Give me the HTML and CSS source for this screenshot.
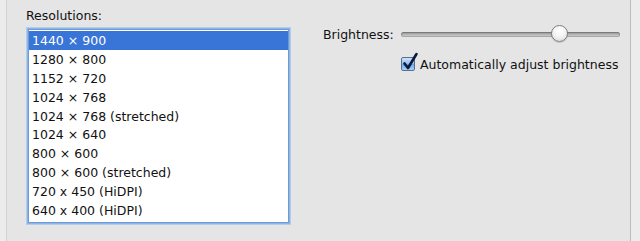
FILE: index.html
```html
<!DOCTYPE html>
<html>
<head>
<meta charset="utf-8">
<link rel="stylesheet" href="styles.css">
</head>
<body>
<div class="panel">
  <div class="left">
    <div class="caption">Resolutions:</div>
    <div class="listbox">
      <div class="row selected">1440 × 900</div>
      <div class="row">1280 × 800</div>
      <div class="row">1152 × 720</div>
      <div class="row">1024 × 768</div>
      <div class="row">1024 × 768 (stretched)</div>
      <div class="row">1024 × 640</div>
      <div class="row">800 × 600</div>
      <div class="row">800 × 600 (stretched)</div>
      <div class="row">720 x 450 (HiDPI)</div>
      <div class="row">640 x 400 (HiDPI)</div>
    </div>
  </div>
  <div class="right">
    <div class="bright-row">
      <span class="label">Brightness:</span>
      <div class="slider">
        <div class="track"></div>
        <div class="knob"></div>
      </div>
    </div>
    <div class="check-row">
      <span class="checkbox">
        <svg width="18" height="20" viewBox="0 0 18 20"><path d="M3.5 11.5 L7 16 L15.5 2" fill="none" stroke="#0d1a3a" stroke-width="2.6" stroke-linecap="round" stroke-linejoin="round"/></svg>
      </span>
      <span class="check-label">Automatically adjust brightness</span>
    </div>
  </div>
</div>
</body>
</html>
```
FILE: styles.css
```css
html, body {
  margin: 0;
  padding: 0;
}
body {
  background: #ececec;
  width: 640px;
  height: 241px;
  overflow: hidden;
  font-family: "DejaVu Sans", "Liberation Sans", sans-serif;
  font-size: 12.5px;
  color: #111;
}
.panel {
  margin-left: 6px;
  width: 625px;
  height: 241px;
  background: #e5e5e5;
  border-left: 1px solid #d2d2d2;
  border-right: 1px solid #bcbcbc;
  display: flex;
  box-sizing: border-box;
}
.left {
  margin-left: 21px;
  width: 261px;
  padding-top: 8px;
}
.caption {
  height: 16px;
  line-height: 16px;
  margin-left: -2px;
  margin-bottom: 5px;
}
.listbox {
  background: #fff;
  border: 1px solid #6f9ad6;
  box-shadow: 0 0 0 1px #8ab5ea, 0 0 0 2px rgba(140,185,235,0.55);
  padding-top: 1px;
  height: 194px;
  box-sizing: border-box;
}
.row {
  height: 18.9px;
  line-height: 19px;
  padding-left: 3px;
  white-space: nowrap;
}
.row.selected {
  background: #3875d7;
  color: #fff;
}
.right {
  margin-left: 34px;
  padding-top: 24px;
}
.bright-row {
  display: flex;
  align-items: center;
  height: 20px;
}
.label {
  width: 78px;
}
.slider {
  position: relative;
  width: 219px;
  height: 20px;
}
.track {
  position: absolute;
  left: 0;
  right: 0;
  top: 8px;
  height: 5px;
  border-radius: 3px;
  background: linear-gradient(#8c8c8c, #bdbdbd 60%, #d4d4d4);
  box-shadow: inset 0 0 0 1px rgba(0,0,0,0.18);
}
.knob {
  position: absolute;
  left: 150px;
  top: 1px;
  width: 17px;
  height: 17px;
  border-radius: 50%;
  box-sizing: border-box;
  border: 1px solid #7e7e7e;
  background: radial-gradient(circle at 50% 30%, #ffffff 0%, #f4f4f4 45%, #d6d6d6 100%);
  box-shadow: 0 1px 1px rgba(0,0,0,0.15);
}
.check-row {
  display: flex;
  align-items: center;
  margin-top: 11px;
  margin-left: 78px;
  height: 18px;
}
.checkbox {
  position: relative;
  width: 14px;
  height: 14px;
  box-sizing: border-box;
  border: 1px solid #5a6f8f;
  border-radius: 2px;
  background: linear-gradient(#cfe3fb, #8fbaf0 50%, #6ea5ea 51%, #a9d0fb);
  margin-right: 5px;
}
.checkbox svg {
  position: absolute;
  left: -1px;
  top: -6px;
}
.check-label {
  white-space: nowrap;
}
```
